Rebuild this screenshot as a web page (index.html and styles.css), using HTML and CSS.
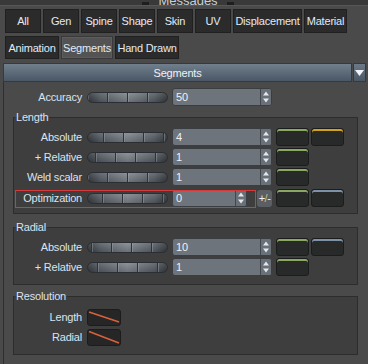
FILE: index.html
```html
<!DOCTYPE html>
<html>
<head>
<meta charset="utf-8">
<link rel="stylesheet" href="styles.css">
</head>
<body>
<div class="titlebar">
  <span class="pin"></span><span class="title">Messages</span><span class="pin"></span>
</div>
<div class="tabs">
  <div class="tabrow">
    <div class="tab">All</div>
    <div class="tab">Gen</div>
    <div class="tab">Spine</div>
    <div class="tab">Shape</div>
    <div class="tab">Skin</div>
    <div class="tab">UV</div>
    <div class="tab t-disp">Displacement</div>
    <div class="tab t-mat">Material</div>
  </div>
  <div class="tabrow second">
    <div class="tab t-anim">Animation</div>
    <div class="tab t-seg on">Segments</div>
    <div class="tab t-hand">Hand Drawn</div>
  </div>
</div>
<div class="header">
  <div class="hbar">Segments</div>
  <div class="hdrop"><svg width="9" height="6" viewBox="0 0 9 6"><path d="M0 0H9L4.5 6Z" fill="#f2f4f6"/></svg></div>
</div>
<div class="panel">
  <div class="row">
    <span class="lbl">Accuracy</span>
    <div class="slider" style="--o:19px"></div>
    <div class="num"><span class="val">50</span><span class="spin"><svg width="8" height="14" viewBox="0 0 8 14"><path d="M1 5.5L4 1.5L7 5.5Z M1 8.5L4 12.5L7 8.5Z" fill="#e4e8ec"/></svg></span></div>
  </div>

  <fieldset class="grp g-len">
    <legend>Length</legend>
    <div class="row">
      <span class="lbl">Absolute</span>
      <div class="slider" style="--o:15px"></div>
      <div class="num"><span class="val">4</span><span class="spin"><svg width="8" height="14" viewBox="0 0 8 14"><path d="M1 5.5L4 1.5L7 5.5Z M1 8.5L4 12.5L7 8.5Z" fill="#e4e8ec"/></svg></span></div>
      <div class="sw green"></div><div class="sw gold"></div>
    </div>
    <div class="row">
      <span class="lbl">+ Relative</span>
      <div class="slider" style="--o:7px"></div>
      <div class="num"><span class="val">1</span><span class="spin"><svg width="8" height="14" viewBox="0 0 8 14"><path d="M1 5.5L4 1.5L7 5.5Z M1 8.5L4 12.5L7 8.5Z" fill="#e4e8ec"/></svg></span></div>
      <div class="sw green"></div>
    </div>
    <div class="row">
      <span class="lbl">Weld scalar</span>
      <div class="slider" style="--o:19px"></div>
      <div class="num"><span class="val">1</span><span class="spin"><svg width="8" height="14" viewBox="0 0 8 14"><path d="M1 5.5L4 1.5L7 5.5Z M1 8.5L4 12.5L7 8.5Z" fill="#e4e8ec"/></svg></span></div>
      <div class="sw green"></div>
    </div>
    <div class="row opt">
      <span class="lbl">Optimization</span>
      <div class="slider" style="--o:14px"></div>
      <div class="num short"><span class="val">0</span><span class="spin"><svg width="8" height="14" viewBox="0 0 8 14"><path d="M1 5.5L4 1.5L7 5.5Z M1 8.5L4 12.5L7 8.5Z" fill="#e4e8ec"/></svg></span></div>
      <div class="pm">+<span class="slash">/</span>-</div>
      <div class="sw green"></div><div class="sw blue"></div>
    </div>
  </fieldset>

  <fieldset class="grp g-rad">
    <legend>Radial</legend>
    <div class="row">
      <span class="lbl">Absolute</span>
      <div class="slider" style="--o:3px"></div>
      <div class="num"><span class="val">10</span><span class="spin"><svg width="8" height="14" viewBox="0 0 8 14"><path d="M1 5.5L4 1.5L7 5.5Z M1 8.5L4 12.5L7 8.5Z" fill="#e4e8ec"/></svg></span></div>
      <div class="sw green"></div><div class="sw blue"></div>
    </div>
    <div class="row">
      <span class="lbl">+ Relative</span>
      <div class="slider" style="--o:9px"></div>
      <div class="num"><span class="val">1</span><span class="spin"><svg width="8" height="14" viewBox="0 0 8 14"><path d="M1 5.5L4 1.5L7 5.5Z M1 8.5L4 12.5L7 8.5Z" fill="#e4e8ec"/></svg></span></div>
      <div class="sw green"></div>
    </div>
  </fieldset>

  <fieldset class="grp g-res">
    <legend>Resolution</legend>
    <div class="row">
      <span class="lbl">Length</span>
      <div class="curve"><svg width="32" height="15" viewBox="0 0 32 15"><path d="M1 2L31 12" stroke="#d8623c" stroke-width="1.6" fill="none"/></svg></div>
    </div>
    <div class="row">
      <span class="lbl">Radial</span>
      <div class="curve"><svg width="32" height="15" viewBox="0 0 32 15"><path d="M1 1.5L31 13" stroke="#d8623c" stroke-width="1.6" fill="none"/></svg></div>
    </div>
  </fieldset>
</div>
</body>
</html>
```

FILE: styles.css
```css
html, body {
  margin: 0;
  padding: 0;
}
body {
  width: 368px;
  height: 364px;
  overflow: hidden;
  background: #4a4a4a;
  font-family: "Liberation Sans", Arial, sans-serif;
  font-size: 11px;
  letter-spacing: -0.2px;
  color: #dbe3ee;
}

/* title bar (clipped, as in the reference) */
.titlebar {
  height: 5px;
  border-bottom: 1px solid #575757;
  background: #393939;
  overflow: hidden;
  display: flex;
  justify-content: center;
  align-items: flex-end;
  gap: 9px;
  padding-left: 8px;
}
.title {
  font-size: 13px;
  line-height: 13px;
  margin-bottom: -2px;
  color: #c9ced4;
  letter-spacing: 0;
}
.pin {
  width: 7px;
  height: 3px;
  background: #1e1e1e;
}

/* tabs */
.tabs {
  padding-left: 5px;
  margin-top: 3px;
}
.tabrow {
  display: flex;
  gap: 2px;
}
.tabrow.second {
  margin-top: 3px;
}
.tab {
  width: 36px;
  height: 24px;
  box-sizing: border-box;
  border: 1px solid #202020;
  background: #2b2b2b;
  color: #e2eaf6;
  display: flex;
  align-items: center;
  justify-content: center;
  white-space: nowrap;
}
.second .tab {
  height: 23px;
}
.t-disp { width: 69px; }
.t-mat { width: 43px; }
.t-anim { width: 54px; }
.t-seg { width: 52px; }
.t-hand { width: 64px; }
.tab.on {
  background: #535353;
  border-color: #393939;
  box-shadow: inset 0 0 0 1px #5d5d5d;
}

/* header */
.header {
  display: flex;
  gap: 1px;
  margin-top: 4px;
  padding-left: 3px;
  height: 19px;
}
.hbar {
  width: 349px;
  box-sizing: border-box;
  border: 1px solid #343a41;
  background: linear-gradient(#717f8d, #4a5766);
  color: #eef2f6;
  display: flex;
  align-items: center;
  justify-content: center;
}
.hdrop {
  width: 13px;
  box-sizing: border-box;
  border: 1px solid #343a41;
  background: linear-gradient(#6c7988, #4a5766);
  display: flex;
  align-items: center;
  justify-content: center;
}

/* panel */
.panel {
  border-left: 1px solid #2f2f2f;
  margin-left: 3px;
  padding-top: 6px;
  height: 282px;
  box-sizing: border-box;
  overflow: hidden;
}

.row {
  display: flex;
  align-items: center;
  height: 18px;
  position: relative;
}
.row + .row {
  margin-top: 2px;
}
.lbl {
  width: 78px;
  text-align: right;
  margin-right: 5px;
  white-space: nowrap;
}
.grp .lbl {
  width: 68px;
}

.slider {
  width: 81px;
  height: 11px;
  box-sizing: border-box;
  border: 1px solid #2b2e32;
  border-radius: 6px;
  margin-right: 4px;
  background:
    linear-gradient(90deg, #2f3337 0 1px, rgba(170,178,186,0.35) 1px 2px, transparent 2px) var(--o) 0 / 20px 100% repeat-x,
    linear-gradient(180deg, rgba(255,255,255,0.10), rgba(0,0,0,0.15)),
    linear-gradient(90deg, #363a3f 0%, #585f66 16%, #7f868d 50%, #585f66 84%, #363a3f 100%);
}

.num {
  width: 100px;
  height: 18px;
  box-sizing: border-box;
  border: 1px solid #3a3e43;
  border-radius: 3px;
  background: #6d747b;
  display: flex;
  margin-right: 4px;
  overflow: hidden;
}
.num.short {
  width: 75px;
  margin-right: 10px;
}
.val {
  flex: 1;
  padding-left: 3px;
  line-height: 16px;
  color: #eef2f6;
}
.spin {
  width: 10px;
  border-left: 1px solid #42474c;
  background: #697077;
  display: flex;
  align-items: center;
  justify-content: center;
}

.sw {
  width: 33px;
  height: 18px;
  box-sizing: border-box;
  border: 1px solid #1b1c1c;
  border-radius: 3px;
  background: #282a29;
  margin-right: 2px;
}
.sw.green { box-shadow: inset 0 2px 0 #8aa862; }
.sw.gold { box-shadow: inset 0 2px 0 #d2a11d; }
.sw.blue { box-shadow: inset 0 2px 0 #7d92a6; }

.pm {
  width: 15px;
  height: 17px;
  box-sizing: border-box;
  border-radius: 3px;
  background: #5b5f63;
  color: #eef0f2;
  font-size: 11px;
  letter-spacing: -0.5px;
  display: flex;
  align-items: center;
  justify-content: center;
  margin-right: 4px;
}
.slash {
  color: #b7c98e;
}

/* highlight box over the optimization row */
.row.opt {
  margin-top: 3px;
}
.row.opt::after {
  content: "";
  position: absolute;
  left: 1px;
  top: 1px;
  width: 241px;
  height: 18px;
  box-sizing: border-box;
  border: 1px solid #d8383a;
  pointer-events: none;
}

/* groups */
.grp {
  margin: 0 0 0 9px;
  width: 345px;
  box-sizing: border-box;
  border: 1px solid #2d2d2d;
  background: #3e3e3e;
  padding: 4px 0 6px 0;
  min-inline-size: 0;
}
.grp legend {
  padding: 0 1px;
  margin-left: 1px;
  line-height: 13px;
  height: 13px;
  color: #dbe3ee;
}
.g-len { margin-top: 5px; }
.g-rad { margin-top: 7px; padding-bottom: 8px; }
.g-res { margin-top: 5px; padding-top: 5px; padding-bottom: 8px; }

.curve {
  width: 34px;
  height: 17px;
  box-sizing: border-box;
  border: 1px solid #1c1c1c;
  border-radius: 3px;
  background: #262626;
  display: flex;
  align-items: center;
  justify-content: center;
}
```
